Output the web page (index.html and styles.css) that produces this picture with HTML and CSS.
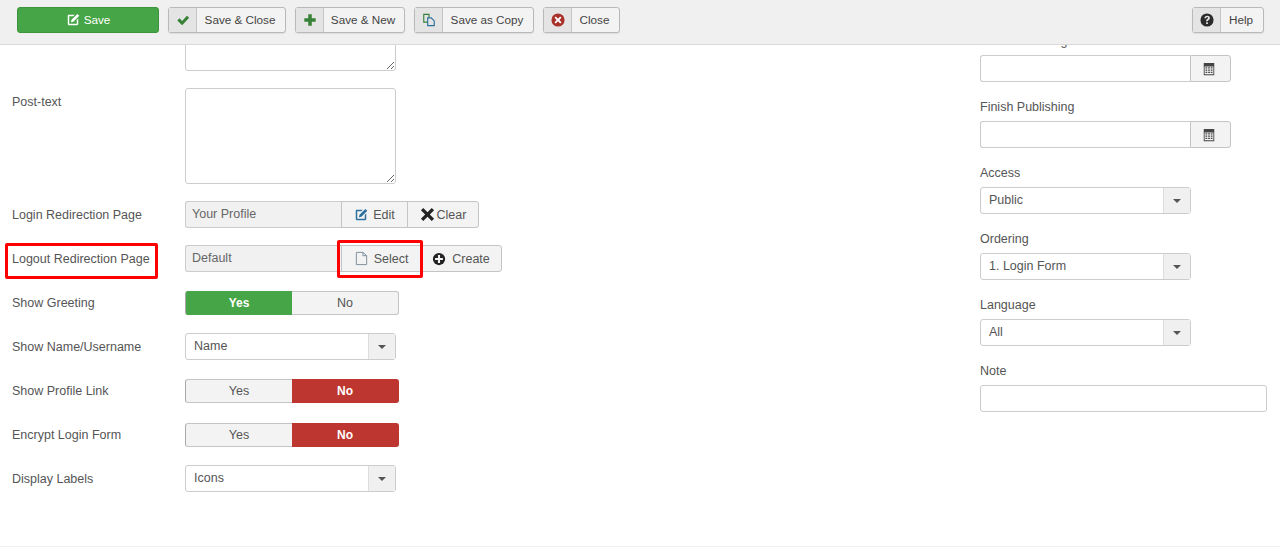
FILE: index.html
```html
<!DOCTYPE html>
<html lang="en">
<head>
  <meta charset="UTF-8" />
  <title>Modules: Login</title>
  <link rel="stylesheet" href="styles.css">
</head>
<body>
  <svg class="sprites" width="0" height="0" aria-hidden="true">
    <symbol id="i-edit" viewBox="0 0 16 16"><path d="M2.500 2H10L8.300 3.700H3.700v8.600h8.600V8L14 6.300v6.400c0 .8-.6 1.300-1.300 1.300H3.300C2.600 14 2 13.500 2 12.700V3.300C2 2.600 2.200 2 2.500 2zM13 1l2.200 2.200-6.700 6.700-3 .8.800-3z"/></symbol>
    <symbol id="i-check" viewBox="0 0 16 16"><path d="M1.500 8.500 4 6l3 3 5.500-6L15 5.500 7 14z"/></symbol>
    <symbol id="i-plus" viewBox="0 0 16 16"><path d="M6 1.500h4V6h4.500v4H10v4.500H6V10H1.500V6H6z"/></symbol>
    <symbol id="i-copy" viewBox="0 0 16 16"><path fill="none" stroke="#378137" stroke-width="1.300" d="M2 1.500h6v9H2z"/><path fill="#e4e4e4" stroke="#2a6f9e" stroke-width="1.300" d="M6.500 5.500h4l3.500 3.500v5.500H6.500z"/></symbol>
    <symbol id="i-close" viewBox="0 0 16 16"><circle cx="8" cy="8" r="7.500"/><path fill="#fff" d="M5.500 4 8 6.500 10.500 4 12 5.500 9.500 8 12 10.500 10.500 12 8 9.500 5.500 12 4 10.500 6.500 8 4 5.500z"/></symbol>
    <symbol id="i-help" viewBox="0 0 16 16"><circle cx="8" cy="8" r="7.500"/><path fill="#e4e4e4" d="M5 6c0-2 1.400-3 3.200-3C10 3 11.300 4 11.300 5.700c0 1.400-.8 2-1.600 2.500-.6.400-.8.700-.8 1.300H7V9c0-1.100.5-1.600 1.200-2.100.6-.4 1-.7 1-1.200 0-.6-.4-1-1-1-.7 0-1.100.4-1.200 1.300zM7 10.500h2v2H7z"/></symbol>
    <symbol id="i-cross" viewBox="0 0 16 16"><path d="M1 3.500 3.500 1 8 5.500 12.500 1 15 3.500 10.500 8 15 12.500 12.500 15 8 10.500 3.500 15 1 12.500 5.500 8z"/></symbol>
    <symbol id="i-file" viewBox="0 0 16 16"><path fill="none" stroke="currentColor" d="M2.500 1.500h7L13.500 5v9.500h-11zM9.500 1.500V5h4"/></symbol>
    <symbol id="i-create" viewBox="0 0 16 16"><circle cx="8" cy="8" r="7"/><path fill="#f3f3f3" d="M6.800 3.500h2.400v3.300h3.300v2.400H9.200v3.300H6.800V9.200H3.500V6.800h3.300z"/></symbol>
    <symbol id="i-cal" viewBox="0 0 16 16"><path d="M2 1h12v14H2zM3 5v9h10V5z"/><path d="M4 6h2v1.500H4zM7 6h2v1.500H7zM10 6h2v1.500h-2zM4 8.500h2V10H4zM7 8.500h2V10H7zM10 8.500h2V10h-2zM4 11h2v1.500H4zM7 11h2v1.500H7zM10 11h2v1.500h-2z"/></symbol>
  </svg>

  <header class="toolbar">
    <button class="tb-save"><svg class="ico"><use href="#i-edit"/></svg><span class="tb-save-text">Save</span></button>
    <button class="tb-btn tb-close-save"><span class="tb-ico ico-green"><svg class="ico"><use href="#i-check"/></svg></span><span class="tb-text">Save &amp; Close</span></button>
    <button class="tb-btn tb-new"><span class="tb-ico ico-green"><svg class="ico"><use href="#i-plus"/></svg></span><span class="tb-text">Save &amp; New</span></button>
    <button class="tb-btn tb-copy"><span class="tb-ico"><svg class="ico"><use href="#i-copy"/></svg></span><span class="tb-text">Save as Copy</span></button>
    <button class="tb-btn tb-cancel"><span class="tb-ico ico-red"><svg class="ico"><use href="#i-close"/></svg></span><span class="tb-text">Close</span></button>
    <button class="tb-btn tb-help"><span class="tb-ico ico-dark"><svg class="ico"><use href="#i-help"/></svg></span><span class="tb-text">Help</span></button>
  </header>

  <main class="content">
    <section class="col-left">
      <div class="row row-area">
        <label class="lbl"></label>
        <textarea class="area"></textarea>
      </div>
      <div class="row row-area">
        <label class="lbl">Post-text</label>
        <textarea class="area"></textarea>
      </div>
      <div class="row">
        <label class="lbl">Login Redirection Page</label>
        <div class="picker">
          <div class="pick-value">Your Profile</div>
          <button class="pick-btn btn-edit"><svg class="ico ico-blue"><use href="#i-edit"/></svg>Edit</button>
          <button class="pick-btn btn-clear"><svg class="ico ico-black"><use href="#i-cross"/></svg>Clear</button>
        </div>
      </div>
      <div class="row">
        <label class="lbl"><span class="mark mark-label"></span>Logout Redirection Page</label>
        <div class="picker">
          <div class="pick-value">Default</div>
          <button class="pick-btn btn-select"><span class="mark mark-select"></span><svg class="ico ico-file"><use href="#i-file"/></svg>Select</button>
          <button class="pick-btn btn-create"><svg class="ico ico-black"><use href="#i-create"/></svg>Create</button>
        </div>
      </div>
      <div class="row">
        <label class="lbl">Show Greeting</label>
        <div class="toggle"><span class="opt opt-yes">Yes</span><span class="opt">No</span></div>
      </div>
      <div class="row">
        <label class="lbl">Show Name/Username</label>
        <div class="select"><span class="sel-text">Name</span><span class="sel-arrow"></span></div>
      </div>
      <div class="row">
        <label class="lbl">Show Profile Link</label>
        <div class="toggle"><span class="opt">Yes</span><span class="opt opt-no">No</span></div>
      </div>
      <div class="row">
        <label class="lbl">Encrypt Login Form</label>
        <div class="toggle"><span class="opt">Yes</span><span class="opt opt-no">No</span></div>
      </div>
      <div class="row">
        <label class="lbl">Display Labels</label>
        <div class="select"><span class="sel-text">Icons</span><span class="sel-arrow"></span></div>
      </div>
    </section>

    <aside class="col-right">
      <div class="field">
        <label class="side-lbl">Start Publishing</label>
        <div class="date"><input class="date-input" type="text"><span class="date-btn"><svg class="ico"><use href="#i-cal"/></svg></span></div>
      </div>
      <div class="field">
        <label class="side-lbl">Finish Publishing</label>
        <div class="date"><input class="date-input" type="text"><span class="date-btn"><svg class="ico"><use href="#i-cal"/></svg></span></div>
      </div>
      <div class="field">
        <label class="side-lbl">Access</label>
        <div class="select"><span class="sel-text">Public</span><span class="sel-arrow"></span></div>
      </div>
      <div class="field">
        <label class="side-lbl">Ordering</label>
        <div class="select"><span class="sel-text">1. Login Form</span><span class="sel-arrow"></span></div>
      </div>
      <div class="field">
        <label class="side-lbl">Language</label>
        <div class="select"><span class="sel-text">All</span><span class="sel-arrow"></span></div>
      </div>
      <div class="field">
        <label class="side-lbl">Note</label>
        <input class="note" type="text">
      </div>
    </aside>
  </main>
</body>
</html>
```

FILE: styles.css
```css
* { box-sizing: border-box; }

html, body { height: 100%; }

body {
  margin: 0;
  display: flex; flex-direction: column;
  background: #fff;
  color: #555;
  font-family: "Liberation Sans", Arial, sans-serif;
  font-size: 12.5px;
  overflow: hidden;
}

.sprites { position: absolute; }

.ico { width: 14px; height: 14px; fill: currentColor; flex: none; }

/* toolbar */
.toolbar {
  height: 45px; flex: none;
  display: flex; align-items: flex-start;
  padding: 7px 16px 0 17px;
  background: #f0f0f0;
  border-bottom: 1px solid #d9d9d9;
  position: relative; z-index: 2;
}
.toolbar button { font-family: inherit; font-size: 11.7px; padding: 0; cursor: pointer; }

.tb-save {
  width: 142px; height: 26px;
  display: flex; align-items: center; justify-content: center; gap: 4px;
  background: #46a546; color: #fff;
  border: 1px solid #3d923d; border-radius: 3px;
  margin-right: 9px;
}
.tb-save-text { padding-bottom: 2px; }

.tb-btn {
  height: 26px;
  display: flex; align-items: stretch;
  background: #f3f3f3; color: #444;
  border: 1px solid #b9b9b9; border-radius: 3px;
  box-shadow: 0 1px 1px rgba(0,0,0,0.08);
  margin-right: 9px;
}
.tb-ico {
  width: 28px; flex: none;
  display: flex; align-items: center; justify-content: center;
  background: #e4e4e4;
  border-right: 1px solid #c4c4c4;
}
.tb-text { flex: 1; align-self: center; text-align: center; padding: 0 2px 2px 0; }
.ico-green { color: #378137; }
.ico-red { color: #a9312a; }
.ico-dark { color: #2b2b2b; }

.tb-close-save { width: 118px; }
.tb-new { width: 110px; }
.tb-copy { width: 120px; }
.tb-cancel { width: 77px; }
.tb-help { width: 72px; margin: 0 0 0 auto; }

/* form */
.content {
  flex: 1; min-height: 0;
  display: flex;
  overflow: hidden;
  border-bottom: 1px solid #f2f2f2;
}

.col-left { width: 980px; flex: none; margin-top: -70px; padding-left: 12px; }
.col-right { width: 300px; flex: none; margin-top: -17px; }

.row { display: flex; align-items: flex-start; height: 28px; margin-bottom: 16px; }
.row-area { height: auto; margin-bottom: 17px; }

.lbl { width: 173px; flex: none; position: relative; padding-top: 7px; }

.area {
  width: 211px; height: 96px;
  display: block;
  border: 1px solid #ccc; border-radius: 3px;
  background: #fff;
}

.picker { display: flex; height: 27px; }
.pick-value {
  width: 156px;
  display: flex; align-items: center;
  padding: 0 0 1px 6px;
  color: #666;
  background: #f1f1f1;
  background-image: radial-gradient(#e6e6e6 0.5px, transparent 0.7px);
  background-size: 2px 2px;
  border: 1px solid #ccc; border-right: none;
  border-radius: 3px 0 0 3px;
}
.pick-btn {
  display: flex; align-items: center; justify-content: center; gap: 5px;
  height: 27px; padding: 0;
  background: #f3f3f3; color: #555;
  font-family: inherit; font-size: 12.5px;
  border: 1px solid #c4c4c4;
  margin-left: -1px;
  position: relative;
}
.btn-edit { width: 67px; margin-left: 0; }
.btn-clear { width: 72px; border-radius: 0 3px 3px 0; gap: 2px; }
.btn-clear .ico { width: 15px; height: 15px; }
.btn-select { width: 80px; margin-left: 0; }
.btn-create { width: 82px; border-radius: 0 3px 3px 0; gap: 6px; }
.ico-blue { color: #2a6f9e; }
.ico-black { color: #222; }
.ico-file { color: #7b8b96; width: 15px; height: 15px; }

/* red highlight boxes from the screenshot */
.mark { position: absolute; border: 3px solid #f00; border-radius: 2px; pointer-events: none; }
.mark-label { left: -7px; top: -2px; width: 153px; height: 36px; }
.mark-select { left: -5px; top: -6px; width: 86px; height: 38px; z-index: 1; }

.toggle { display: flex; width: 214px; height: 24px; margin-top: 2px; }
.opt {
  width: 107px;
  display: flex; align-items: center; justify-content: center;
  background: #f3f3f3; color: #555;
  border: 1px solid #c4c4c4;
}
.opt:first-child { border-radius: 3px 0 0 3px; border-right: none; border-left-color: #aaa; }
.opt:last-child { border-radius: 0 3px 3px 0; border-left: none; }
.opt-yes { background: #46a546; border-color: #46a546; color: #fff; font-size: 12px; font-weight: bold; }
.opt-no { background: #bd362f; border-color: #bd362f; color: #fff; font-size: 12px; font-weight: bold; }

.select {
  width: 211px; height: 27px;
  display: flex;
  background: #fff;
  border: 1px solid #ccc; border-radius: 3px;
}
.sel-text { flex: 1; align-self: center; padding: 0 0 1px 8px; }
.sel-arrow {
  width: 27px; flex: none;
  display: flex; align-items: center; justify-content: center;
  background: #f0f0f0;
  border-left: 1px solid #ddd;
}
.sel-arrow::after {
  content: "";
  border-style: solid; border-color: #555 transparent transparent;
  border-width: 4px 4px 0;
}

.field { margin-bottom: 12px; }
.side-lbl { display: block; height: 27px; padding-top: 6px; }

.date { display: flex; width: 251px; height: 27px; }
.date-input {
  flex: 1; min-width: 0;
  border: 1px solid #ccc; border-right: none;
  border-radius: 3px 0 0 3px;
}
.date-btn {
  width: 41px; flex: none;
  display: flex; align-items: center; justify-content: center;
  padding-right: 3px;
  background: #f3f3f3; color: #444;
  border: 1px solid #c4c4c4;
  border-radius: 0 3px 3px 0;
}

.note {
  display: block; width: 287px; height: 27px;
  border: 1px solid #ccc; border-radius: 3px;
}
```
